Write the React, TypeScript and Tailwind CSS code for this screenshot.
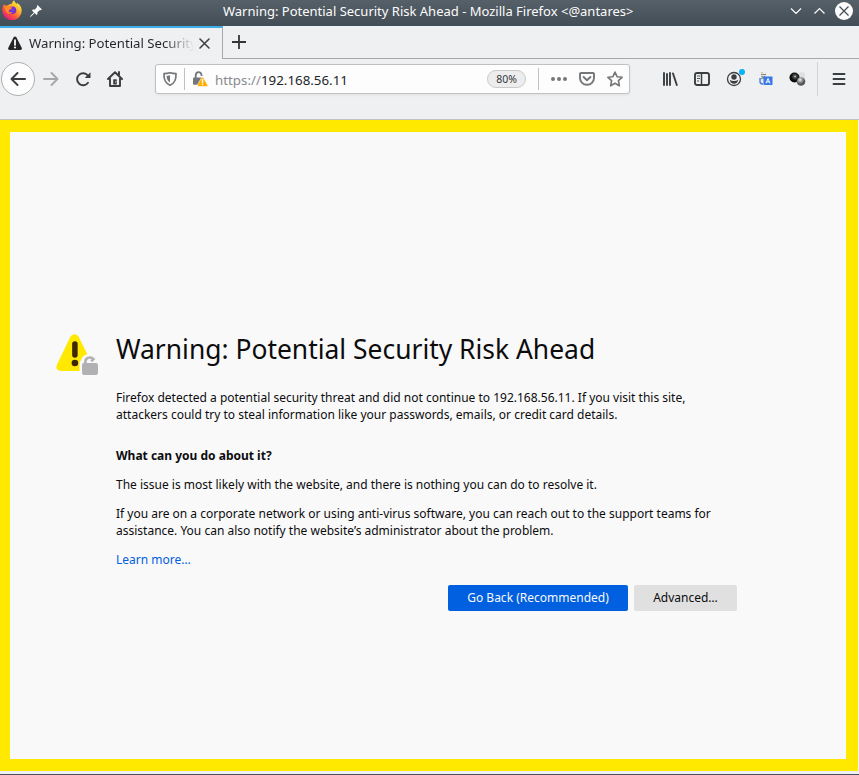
import React from 'react';

const font = "font-['Noto_Sans',sans-serif]";

function FirefoxLogo() {
  return (
    <svg className="ml-[2px] h-5 w-5 shrink-0" viewBox="0 0 20 20">
      <defs>
        <linearGradient id="fxBody" x1="0.85" y1="0.05" x2="0.2" y2="0.95">
          <stop offset="0" stopColor="#fff14f" />
          <stop offset="0.35" stopColor="#ffb52b" />
          <stop offset="0.65" stopColor="#ff5a36" />
          <stop offset="1" stopColor="#e31587" />
        </linearGradient>
        <radialGradient id="fxCore"><stop offset="0" stopColor="#7542e5" /><stop offset="1" stopColor="#7b2bc4" /></radialGradient>
      </defs>
      <path d="M2.1 4.1c.3 1 .8 1.4 1.4 1.7.8-.5 1.7-.7 2.5-.5C7.500 3.900 9 3.800 10 3.700c.1-1.500.8-2.700 2.200-3.500.3 1.600 1.200 2.600 2.500 3.600.5-.2.600-.500.600-.900 2.800 1.700 4.400 4.200 4.400 7.500A9.600 9.600 0 0 1 .4 10.800C.2 8.300.8 5.900 2.100 4.100Z" fill="url(#fxBody)" />
      <circle cx="10.500" cy="10.200" r="3.800" fill="url(#fxCore)" />
      <path d="M2.700 7.100c2-1.700 4-1.200 5.100.1l2.500.2c-.3 1.400-1.500 1.400-2.500 2-.7.500-.5 1.500-1.600 1.700.8 1.700 3 1.300 4.500.8-2 2.500-5.600 2-6.900-.7Z" fill="#ff8b26" />
    </svg>
  );
}

function TitleBar() {
  return (
    <header className="flex h-[26px] items-start bg-linear-to-b from-[#566069] to-[#434d55] text-[#fcfcfc]">
      <FirefoxLogo />
      <svg className="mt-[5px] ml-[8px] h-3 w-3" viewBox="0 0 12 12" fill="#fcfcfc">
        <path d="M7.500 0 12 4.500 10.700 5.200 10 4.900 7.500 7.200 7.400 9.200 6.500 10 4.600 8.100 1.200 11.400 0 12 .6 10.800 3.900 7.400 2 5.500 2.800 4.600 4.900 4.500 7.100 2 6.800 1.100Z" />
      </svg>
      <h1 className="ml-[181px] mt-[2px] whitespace-nowrap text-[13px] leading-[18px]">Warning: Potential Security Risk Ahead - Mozilla Firefox &lt;@antares&gt;</h1>
      <svg className="ml-auto h-[22px] w-[70px]" viewBox="0 0 70 22" fill="none" stroke="#fcfcfc" strokeWidth="1.200">
        <path d="m2 8.500 5 5 5-5M25.500 13.500l5-5 5 5" />
        <circle cx="55" cy="11" r="9" fill="#fcfcfc" stroke="none" />
        <path d="m50.500 6.500 9 9m0-9-9 9" stroke="#475057" strokeWidth="1.300" />
      </svg>
    </header>
  );
}

function TabStrip() {
  return (
    <div className="flex h-[33px]">
      <div className="flex w-[223px] items-center border-t-2 border-r border-t-[#3daee9] border-r-[#a6a9ac] pl-[8px]">
        <svg className="h-[15px] w-[14px] shrink-0" viewBox="0 0 14 15">
          <path d="M5.500 1.400q1.500-2 3 0L13.800 12q.6 2-1.300 2h-11q-1.900 0-1.300-2Z" fill="#232629" />
          <path d="M7 4.200v4.700" stroke="#f2f3f4" strokeWidth="1.900" strokeLinecap="round" /><circle cx="7" cy="11.500" r="1.100" fill="#f2f3f4" />
        </svg>
        <span className="mb-[2px] ml-[7px] w-[165px] overflow-hidden whitespace-nowrap bg-linear-to-r from-[#232629] from-82% to-transparent to-100% bg-clip-text text-[13.200px] leading-5 text-transparent">Warning: Potential Security Risk Ahead</span>
        <svg className="ml-[5px] h-[11px] w-[11px]" viewBox="0 0 11 11" stroke="#404346" strokeWidth="1.600" strokeLinecap="round"><path d="m1 1 9 9m0-9-9 9" /></svg>
      </div>
      <div className="flex-1 border-b border-[#a6a9ac] pl-[9px] pt-[9px]">
        <svg className="h-[14px] w-[14px]" viewBox="0 0 14 14" stroke="#333639" strokeWidth="1.800"><path d="M7 0v14M0 7h14" /></svg>
      </div>
    </div>
  );
}

function AddressBar() {
  return (
    <div className="ml-[32px] flex h-[30px] w-[475px] items-center rounded-[3px] border border-[#bfc1c3] bg-[#fdfdfd] shadow-[0_1px_3px_#00000010]">
      <svg className="ml-[6px] h-4 w-4" viewBox="0 0 16 16" fill="none" stroke="#747678" strokeWidth="1.700">
        <path d="M2 2.600Q5 2.500 8 1.700q3 .8 6 .9C14.300 8 12.400 12.500 8 14.200 3.600 12.500 1.700 8 2 2.600Z" strokeLinejoin="round" />
        <path d="M8 4.200v7.200C5.600 10 4.700 7.700 4.600 4.900Z" fill="#747678" stroke="none" />
      </svg>
      <div className="ml-[6px] h-[22px] w-px bg-[#bfc1c3]" />
      <svg className="ml-[7px] h-4 w-4" viewBox="0 0 16 16">
        <path d="M3.700 7V4.500C3.700.1 9.500.1 9.500 4v1" fill="none" stroke="#747678" strokeWidth="1.800" />
        <rect x="1" y="6.400" width="9" height="7.400" rx="1" fill="#747678" />
        <path d="M9.400 6.800q1-1.500 2 0L15.700 14q.5 1.500-1 1.500H6.500q-1.500 0-1-1.500Z" fill="#ffad00" stroke="#fff" strokeWidth=".6" />
        <path d="M10.500 8.600v3.100" stroke="white" strokeWidth="1.400" strokeLinecap="round" /><circle cx="10.500" cy="13.500" r=".8" fill="white" />
      </svg>
      <span className="mt-[2px] ml-[7px] text-[13.330px] leading-5 text-[#232629]"><span className="text-[#898b8d]">https://</span>192.168.56.11</span>
      <span className="ml-auto flex h-[18px] w-[39px] items-center justify-center rounded-full border border-[#cacaca] bg-[#ededee] text-[10.500px] leading-none text-[#35383b]">80%</span>
      <div className="ml-[12px] h-[22px] w-px bg-[#bfc1c3]" />
      <svg className="ml-[12px] h-4 w-4" viewBox="0 0 16 16" fill="#747678"><circle cx="2" cy="8" r="2" /><circle cx="8" cy="8" r="2" /><circle cx="14" cy="8" r="2" /></svg>
      <svg className="ml-[12px] h-4 w-4" viewBox="0 0 16 16" fill="none" stroke="#747678" strokeWidth="1.900" strokeLinecap="round" strokeLinejoin="round">
        <path d="M2 2h12q1 0 1 1v4a7 6.800 0 0 1-14 0V3q0-1 1-1Z" /><path d="m4.600 6 3.400 3.200L11.400 6" />
      </svg>
      <svg className="mr-[6px] ml-[12px] h-4 w-4" viewBox="0 0 16 16" fill="none" stroke="#747678" strokeWidth="1.600" strokeLinejoin="round">
        <path d="m8 1.100 2.100 4.600 5 .6-3.700 3.400 1 5.100L8 12.300l-4.400 2.500 1-5.100L.9 6.300l5-.6Z" />
      </svg>
    </div>
  );
}

function NavBar() {
  return (
    <div className="flex h-[61px] items-start border-b border-[#c0c1c4] pt-[5px]">
      <div className="mt-[-2px] ml-[1px] flex h-[34px] w-[34px] items-center justify-center rounded-full border border-[#adafb1] bg-[#fdfdfd]">
        <svg className="h-4 w-4" viewBox="0 0 16 16" fill="none" stroke="#3b3e41" strokeWidth="2" strokeLinecap="round" strokeLinejoin="round"><path d="M15 8H1.500M7.500 2l-6 6 6 6" /></svg>
      </div>
      <svg className="mt-[7px] ml-[8px] h-4 w-4" viewBox="0 0 16 16" fill="none" stroke="#a5a7a9" strokeWidth="1.900" strokeLinecap="round" strokeLinejoin="round"><path d="M1 8h13.500M8.500 2l6 6-6 6" /></svg>
      <svg className="mt-[7px] ml-[16px] h-4 w-4" viewBox="0 0 16 16" fill="none" stroke="#3b3e41" strokeWidth="1.900" strokeLinecap="round">
        <path d="M13 11.700A6 6 0 1 1 12.800 4.500" /><path d="M15.500 1.200v5.700H9.700Z" fill="#3b3e41" stroke="none" />
      </svg>
      <svg className="mt-[7px] ml-[16px] h-4 w-4" viewBox="0 0 16 16" fill="none" stroke="#3b3e41" strokeWidth="1.900" strokeLinecap="round" strokeLinejoin="round">
        <path d="m1 8 7-6.800L15 8M3 7.500V15h10V7.500M12 1v3" /><rect x="6.200" y="8.200" width="3.600" height="5.300" rx=".6" fill="#3b3e41" stroke="none" /><circle cx="8.800" cy="10.800" r=".6" fill="#fff" stroke="none" />
      </svg>
      <AddressBar />
      <svg className="mt-[7px] ml-[32px] h-4 w-4" viewBox="0 0 16 16" stroke="#3b3e41" strokeWidth="1.900" strokeLinecap="round"><path d="M2 2v12M5 3v11M8 2v12M11 2.500l3.800 11.500" /></svg>
      <svg className="mt-[7px] ml-[16px] h-4 w-4" viewBox="0 0 16 16" fill="none" stroke="#3b3e41"><rect x="1" y="2" width="14" height="12" rx="2" strokeWidth="1.900" /><path d="M7.500 2v12" strokeWidth="1.500" /><path d="M3 5h3M3 7.500h3M3 10h2" strokeWidth=".9" /></svg>
      <svg className="ml-[16px] h-[24px] w-5" viewBox="0 0 20 24">
        <circle cx="8" cy="15" r="6.500" fill="none" stroke="#3b3e41" strokeWidth="1.300" /><circle cx="8" cy="13" r="2.700" fill="#3b3e41" /><path d="M3.800 15.700q1.500 1.200 4.200 1.200t4.200-1.200Q11.500 19.700 8 19.700t-4.200-4" fill="#3b3e41" /><circle cx="16" cy="8" r="3" fill="#00b3f4" />
      </svg>
      <svg className="mt-[7px] ml-[12px] h-4 w-4" viewBox="0 0 16 16">
        <path d="M2 1.500h7v5l-4 6H3Z" fill="#e9e9e9" />
        <path d="M3 3.500h5M3.500 5l3 3M7 5 3 8" fill="none" stroke="#85898a" strokeWidth="1.100" />
        <circle cx="4" cy="1.600" r=".8" fill="#d9b475" /><path d="M2 7v4q.5 2 3 2" fill="none" stroke="#5386dd" strokeWidth="1.500" />
        <rect x="5.500" y="5.500" width="9" height="8.500" fill="#3978e7" /><path d="m8 12.300 2-4.800 2 4.800M8.700 10.900h2.600" fill="none" stroke="white" />
      </svg>
      <svg className="mt-[7px] ml-[15px] h-4 w-[17px]" viewBox="0 0 17 16">
        <defs>
          <radialGradient id="black" cx=".55" cy=".4"><stop stopColor="#eee" /><stop offset=".25" stopColor="#555" /><stop offset=".7" stopColor="#151515" /><stop offset="1" stopColor="#050505" /></radialGradient>
          <radialGradient id="grey" cx=".4" cy=".3"><stop stopColor="#f3f3f3" /><stop offset=".5" stopColor="#999" /><stop offset="1" stopColor="#555" /></radialGradient>
        </defs>
        <circle cx="12.800" cy="4.500" r="3.500" fill="#e0e0e0" /><circle cx="5.500" cy="6.500" r="5" fill="url(#black)" /><circle cx="12" cy="10.500" r="4.300" fill="url(#grey)" />
      </svg>
      <div className="mt-[-2px] ml-[11px] h-[34px] w-px bg-[#d2d4d6]" />
      <svg className="mt-[7px] ml-[14px] h-4 w-[14px]" viewBox="0 0 14 16" stroke="#3b3e41" strokeWidth="1.900" strokeLinecap="round"><path d="M1.500 3h11M1.500 8h11M1.500 13h11" /></svg>
    </div>
  );
}

function WarningPage() {
  return (
    <main className="h-[651px] w-[858px] border-x-[10px] border-y-[12px] border-r-[12px] border-[#ffe900] bg-[#f9f9fa] pt-[200px] pl-[46px] text-[12px] leading-[17px] text-[#0c0c0d]">
      <div className="flex">
        <svg className="mt-[2px] h-[42px] w-[44px] shrink-0" viewBox="0 0 44 42">
          <path d="M14.500 2.500q4-4.500 8 0L34 25.500V37H5Q-1 36.500.8 31Z" fill="#ffe900" />
          <path d="M18.900 10v11" stroke="#3e2800" strokeWidth="5.500" strokeLinecap="round" /><circle cx="18.900" cy="29" r="3.300" fill="#3e2800" />
          <path d="M23.500 42V29q0-2 1.500-2.500Q26.500 20 33 20q9 0 10 8v14Z" fill="#f9f9fa" />
          <path d="M29.300 30v-1.500q0-5 4.700-5 2.200 0 3.500 1.500l-2.300 2.300" fill="none" stroke="#b1b1b3" strokeWidth="2.600" />
          <rect x="26" y="29" width="16" height="12" rx="2" fill="#b1b1b3" />
        </svg>
        <section className="ml-[16px] w-[621px]">
          <h2 className="whitespace-nowrap text-[26.430px] leading-[34px]">Warning: Potential Security Risk Ahead</h2>
          <p className="mt-[23px] whitespace-nowrap">Firefox detected a potential security threat and did not continue to 192.168.56.11. If you visit this site,<br />attackers could try to steal information like your passwords, emails, or credit card details.</p>
          <h3 className="mt-[24px] font-bold">What can you do about it?</h3>
          <p className="mt-[12px]">The issue is most likely with the website, and there is nothing you can do to resolve it.</p>
          <p className="mt-[12px] whitespace-nowrap">If you are on a corporate network or using anti-virus software, you can reach out to the support teams for<br />assistance. You can also notify the website’s administrator about the problem.</p>
          <a className="mt-[12px] block text-[#0060df]">Learn more…</a>
          <div className="mt-[17px] flex justify-end gap-[6px]">
            <button className="h-[26px] w-[180px] rounded-[2px] bg-[#0060df] pb-px text-[#f9f9fa]">Go Back (Recommended)</button>
            <button className="h-[26px] w-[103px] rounded-[2px] bg-[#e0e0e1] pb-px">Advanced…</button>
          </div>
        </section>
      </div>
    </main>
  );
}

export default function App() {
  return (
    <div className={`flex h-[775px] w-[859px] flex-col overflow-hidden border-b border-[#475057] bg-[#eff0f1] ${font}`}>
      <TitleBar />
      <TabStrip />
      <NavBar />
      <WarningPage />
    </div>
  );
}
